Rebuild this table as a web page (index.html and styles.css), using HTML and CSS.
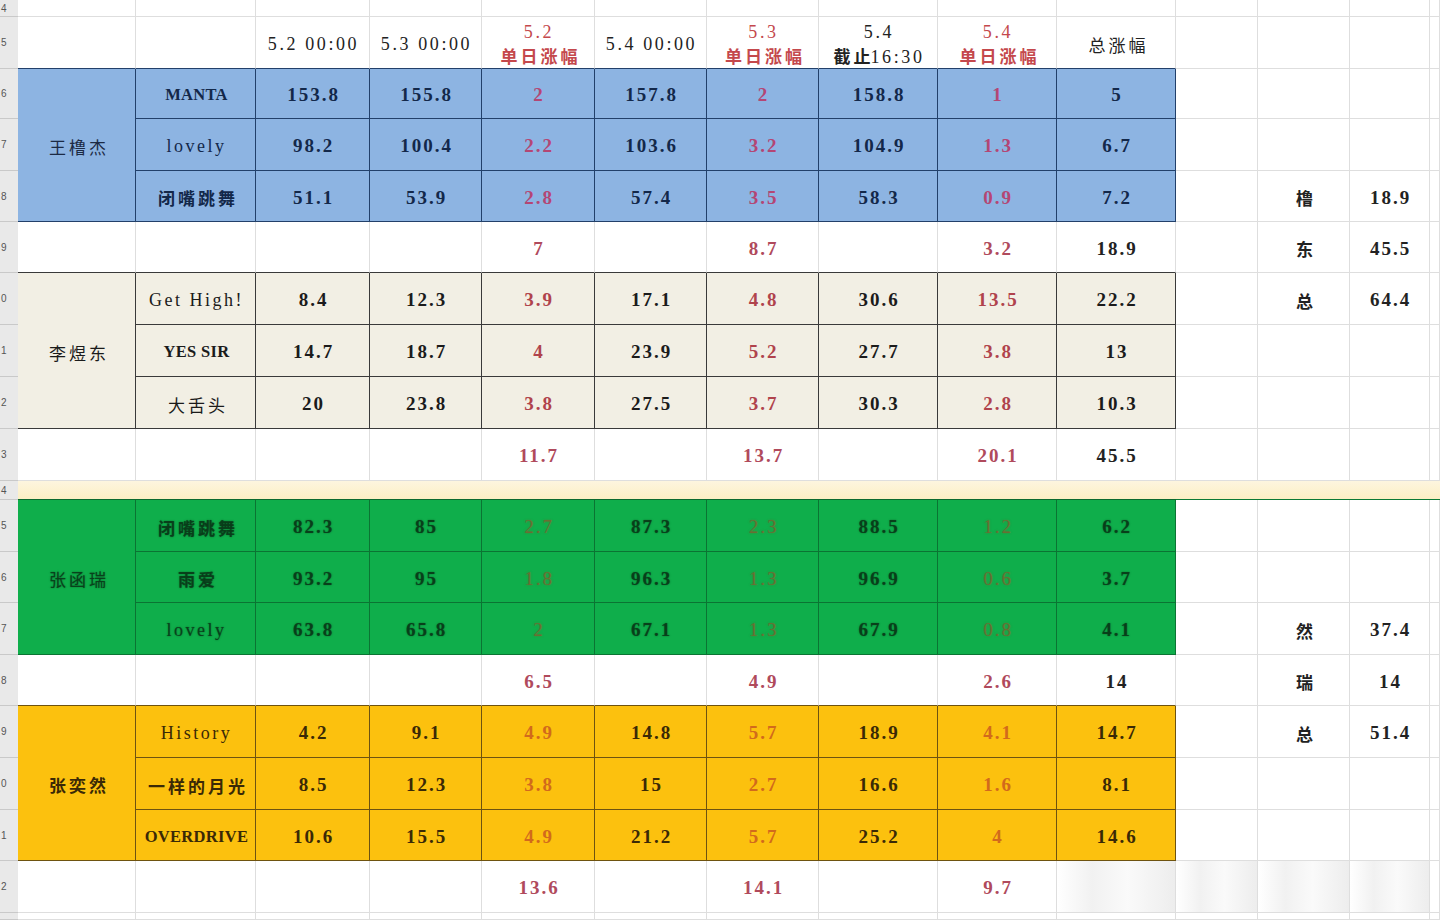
FILE: index.html
```html
<!DOCTYPE html>
<html lang="zh">
<head>
<meta charset="utf-8">
<title>涨幅统计</title>
<link rel="stylesheet" href="styles.css">
</head>
<body>
<div class="sheet">
  <!-- R1 -->
  <div class="g"><span>4</span></div>
  <div class="c"></div><div class="c"></div><div class="c"></div><div class="c"></div><div class="c"></div><div class="c"></div><div class="c"></div><div class="c"></div><div class="c"></div><div class="c"></div><div class="c"></div><div class="c"></div><div class="c"></div><div class="c"></div>
  <!-- R2 header -->
  <div class="g"><span>5</span></div>
  <div class="c hd-blue"></div>
  <div class="c hd-blue"></div>
  <div class="c hd-blue hx">5.2 00:00</div>
  <div class="c hd-blue hx">5.3 00:00</div>
  <div class="c hd-blue hr hx"><div class="two"><span>5.2</span><span class="cn bd">单日涨幅</span></div></div>
  <div class="c hd-blue hx">5.4 00:00</div>
  <div class="c hd-blue hr hx"><div class="two"><span>5.3</span><span class="cn bd">单日涨幅</span></div></div>
  <div class="c hd-blue hx"><div class="two"><span>5.4</span><span><span class="cn bd">截止</span>16:30</span></div></div>
  <div class="c hd-blue hr hx"><div class="two"><span>5.4</span><span class="cn bd">单日涨幅</span></div></div>
  <div class="c hd-blue"><span class="cn">总涨幅</span></div>
  <div class="c"></div><div class="c"></div><div class="c"></div><div class="c"></div>
  <!-- R3 -->
  <div class="g"><span>6</span></div>
  <div class="c b name"><span class="cn">王橹杰</span></div>
  <div class="c b song up">MANTA</div>
  <div class="c b v">153.8</div><div class="c b v">155.8</div><div class="c b r">2</div><div class="c b v">157.8</div><div class="c b r">2</div><div class="c b v">158.8</div><div class="c b r">1</div><div class="c b v">5</div>
  <div class="c"></div><div class="c"></div><div class="c"></div><div class="c"></div>
  <!-- R4 -->
  <div class="g"><span>7</span></div>
  <div class="c b song">lovely</div>
  <div class="c b v">98.2</div><div class="c b v">100.4</div><div class="c b r">2.2</div><div class="c b v">103.6</div><div class="c b r">3.2</div><div class="c b v">104.9</div><div class="c b r">1.3</div><div class="c b v">6.7</div>
  <div class="c"></div><div class="c"></div><div class="c"></div><div class="c"></div>
  <!-- R5 -->
  <div class="g"><span>8</span></div>
  <div class="c b song"><span class="cn bd">闭嘴跳舞</span></div>
  <div class="c b v">51.1</div><div class="c b v">53.9</div><div class="c b r">2.8</div><div class="c b v">57.4</div><div class="c b r">3.5</div><div class="c b v">58.3</div><div class="c b r">0.9</div><div class="c b v">7.2</div>
  <div class="c"></div><div class="c side"><span class="cn bd">橹</span></div><div class="c side v">18.9</div><div class="c"></div>
  <!-- R6 sum -->
  <div class="g"><span>9</span></div>
  <div class="c hd-tan"></div><div class="c hd-tan"></div><div class="c hd-tan"></div><div class="c hd-tan"></div>
  <div class="c hd-tan sr">7</div><div class="c hd-tan"></div><div class="c hd-tan sr">8.7</div><div class="c hd-tan"></div><div class="c hd-tan sr">3.2</div><div class="c hd-tan v">18.9</div>
  <div class="c"></div><div class="c side"><span class="cn bd">东</span></div><div class="c side v">45.5</div><div class="c"></div>
  <!-- R7 -->
  <div class="g"><span>0</span></div>
  <div class="c t name"><span class="cn">李煜东</span></div>
  <div class="c t song">Get High!</div>
  <div class="c t v">8.4</div><div class="c t v">12.3</div><div class="c t r">3.9</div><div class="c t v">17.1</div><div class="c t r">4.8</div><div class="c t v">30.6</div><div class="c t r">13.5</div><div class="c t v">22.2</div>
  <div class="c"></div><div class="c side"><span class="cn bd">总</span></div><div class="c side v">64.4</div><div class="c"></div>
  <!-- R8 -->
  <div class="g"><span>1</span></div>
  <div class="c t song up">YES SIR</div>
  <div class="c t v">14.7</div><div class="c t v">18.7</div><div class="c t r">4</div><div class="c t v">23.9</div><div class="c t r">5.2</div><div class="c t v">27.7</div><div class="c t r">3.8</div><div class="c t v">13</div>
  <div class="c"></div><div class="c"></div><div class="c"></div><div class="c"></div>
  <!-- R9 -->
  <div class="g"><span>2</span></div>
  <div class="c t song"><span class="cn">大舌头</span></div>
  <div class="c t v">20</div><div class="c t v">23.8</div><div class="c t r">3.8</div><div class="c t v">27.5</div><div class="c t r">3.7</div><div class="c t v">30.3</div><div class="c t r">2.8</div><div class="c t v">10.3</div>
  <div class="c"></div><div class="c"></div><div class="c"></div><div class="c"></div>
  <!-- R10 sum -->
  <div class="g"><span>3</span></div>
  <div class="c"></div><div class="c"></div><div class="c"></div><div class="c"></div>
  <div class="c sr">11.7</div><div class="c"></div><div class="c sr">13.7</div><div class="c"></div><div class="c sr">20.1</div><div class="c v">45.5</div>
  <div class="c"></div><div class="c"></div><div class="c"></div><div class="c"></div>
  <!-- R11 band -->
  <div class="g"><span>4</span></div>
  <div class="band wide"></div>
  <!-- R12 -->
  <div class="g"><span>5</span></div>
  <div class="c gr name ft"><span class="cn">张函瑞</span></div>
  <div class="c gr song ft"><span class="cn bd">闭嘴跳舞</span></div>
  <div class="c gr v ft">82.3</div><div class="c gr v ft">85</div><div class="c gr r ft">2.7</div><div class="c gr v ft">87.3</div><div class="c gr r ft">2.3</div><div class="c gr v ft">88.5</div><div class="c gr r ft">1.2</div><div class="c gr v ft">6.2</div>
  <div class="c"></div><div class="c"></div><div class="c"></div><div class="c"></div>
  <!-- R13 -->
  <div class="g"><span>6</span></div>
  <div class="c gr song"><span class="cn bd">雨爱</span></div>
  <div class="c gr v">93.2</div><div class="c gr v">95</div><div class="c gr r">1.8</div><div class="c gr v">96.3</div><div class="c gr r">1.3</div><div class="c gr v">96.9</div><div class="c gr r">0.6</div><div class="c gr v">3.7</div>
  <div class="c"></div><div class="c"></div><div class="c"></div><div class="c"></div>
  <!-- R14 -->
  <div class="g"><span>7</span></div>
  <div class="c gr song">lovely</div>
  <div class="c gr v">63.8</div><div class="c gr v">65.8</div><div class="c gr r">2</div><div class="c gr v">67.1</div><div class="c gr r">1.3</div><div class="c gr v">67.9</div><div class="c gr r">0.8</div><div class="c gr v">4.1</div>
  <div class="c"></div><div class="c side"><span class="cn bd">然</span></div><div class="c side v">37.4</div><div class="c"></div>
  <!-- R15 sum -->
  <div class="g"><span>8</span></div>
  <div class="c hd-gold"></div><div class="c hd-gold"></div><div class="c hd-gold"></div><div class="c hd-gold"></div>
  <div class="c hd-gold sr">6.5</div><div class="c hd-gold"></div><div class="c hd-gold sr">4.9</div><div class="c hd-gold"></div><div class="c hd-gold sr">2.6</div><div class="c hd-gold v">14</div>
  <div class="c"></div><div class="c side"><span class="cn bd">瑞</span></div><div class="c side v">14</div><div class="c"></div>
  <!-- R16 -->
  <div class="g"><span>9</span></div>
  <div class="c y name"><span class="cn bd">张奕然</span></div>
  <div class="c y song">History</div>
  <div class="c y v">4.2</div><div class="c y v">9.1</div><div class="c y r">4.9</div><div class="c y v">14.8</div><div class="c y r">5.7</div><div class="c y v">18.9</div><div class="c y r">4.1</div><div class="c y v">14.7</div>
  <div class="c"></div><div class="c side"><span class="cn bd">总</span></div><div class="c side v">51.4</div><div class="c"></div>
  <!-- R17 -->
  <div class="g"><span>0</span></div>
  <div class="c y song"><span class="cn bd">一样的月光</span></div>
  <div class="c y v">8.5</div><div class="c y v">12.3</div><div class="c y r">3.8</div><div class="c y v">15</div><div class="c y r">2.7</div><div class="c y v">16.6</div><div class="c y r">1.6</div><div class="c y v">8.1</div>
  <div class="c"></div><div class="c"></div><div class="c"></div><div class="c"></div>
  <!-- R18 -->
  <div class="g"><span>1</span></div>
  <div class="c y song up">OVERDRIVE</div>
  <div class="c y v">10.6</div><div class="c y v">15.5</div><div class="c y r">4.9</div><div class="c y v">21.2</div><div class="c y r">5.7</div><div class="c y v">25.2</div><div class="c y r">4</div><div class="c y v">14.6</div>
  <div class="c"></div><div class="c"></div><div class="c"></div><div class="c"></div>
  <!-- R19 sum -->
  <div class="g"><span>2</span></div>
  <div class="c"></div><div class="c"></div><div class="c"></div><div class="c"></div>
  <div class="c sr">13.6</div><div class="c"></div><div class="c sr">14.1</div><div class="c"></div><div class="c sr">9.7</div><div class="c smudge"></div>
  <div class="c smudge"></div><div class="c smudge"></div><div class="c smudge"></div><div class="c"></div>
  <!-- R20 -->
  <div class="g"></div>
  <div class="c"></div><div class="c"></div><div class="c"></div><div class="c"></div><div class="c"></div><div class="c"></div><div class="c"></div><div class="c"></div><div class="c"></div><div class="c"></div><div class="c"></div><div class="c"></div><div class="c"></div><div class="c"></div>
</div>
</body>
</html>
```
FILE: styles.css
```css
html, body {
  margin: 0;
  padding: 0;
  background: #ffffff;
}

.sheet {
  display: grid;
  width: 1440px;
  height: 920px;
  overflow: hidden;
  grid-template-columns: 18px 118px 120px 114px 112px 113px 112px 112px 119px 119px 119px 82px 92px 80px 10px;
  grid-template-rows: 17px 52px 50px 52px 51px 51px 52px 52px 52px 52px 19px 52px 51px 52px 51px 52px 52px 51px 52px 7px;
  font-family: "Liberation Serif", "Noto Sans CJK SC", serif;
  font-size: 19px;
  letter-spacing: 2px;
  color: #222222;
}

.g {
  box-sizing: border-box;
  background: #e9e9e9;
  border-bottom: 1px solid #c9c9c9;
  display: flex;
  align-items: center;
  overflow: hidden;
  font-family: "Liberation Sans", sans-serif;
  font-size: 10px;
  letter-spacing: 0;
  color: #555555;
  padding-left: 1px;
}

.c {
  --line: #dedede;
  box-sizing: border-box;
  border-right: 1px solid var(--line);
  border-bottom: 1px solid var(--line);
  display: flex;
  align-items: center;
  justify-content: center;
  text-align: center;
  white-space: nowrap;
  padding-top: 3px;
  padding-left: 2px;
}

.cn {
  font-family: "Noto Sans CJK SC", sans-serif;
  font-size: 17px;
  letter-spacing: 3px;
  margin-right: -3px;
}
.bd { font-weight: 700; }

.two {
  display: flex;
  flex-direction: column;
  align-items: center;
  line-height: 24px;
}

.hx { font-size: 18px; letter-spacing: 2.6px; }
.hd-blue { border-bottom-color: #22406a; }
.hd-tan { border-bottom-color: #3a3a3a; }
.hd-gold { border-bottom-color: #6e5310; }
.hr { color: #c4484c; }

.name { grid-row: span 3; }

.v { font-weight: 700; }
.song { font-size: 18px; letter-spacing: 2.5px; }
.song.up { font-size: 16.5px; letter-spacing: 0.3px; font-weight: 700; }
.sr { color: #b04a5c; font-weight: 700; }
.side { color: #222222; }

/* blue block */
.b {
  --line: #22406a;
  background: #8db4e2;
  color: #13284a;
}
.b.r { color: #b44674; font-weight: 700; }
.b.name { color: #1c2a44; }

/* tan block */
.t {
  --line: #3a3a3a;
  background: #f2efe4;
  color: #1b1b1b;
}
.t.r { color: #b0434c; font-weight: 700; }

/* band row */
.band {
  background: linear-gradient(#fdf5df, #fcefc4);
  border-bottom: 1px solid #0c7a36;
}
.wide { grid-column: span 14; }

/* green block */
.gr {
  --line: #0b7433;
  background: #0fae4b;
  color: rgba(8, 52, 22, 0.8);
  text-shadow: 0 0 1.5px rgba(8, 52, 22, 0.7);
}
.gr.r { color: rgba(150, 80, 40, 0.55); text-shadow: 0 0 2px rgba(150, 80, 40, 0.5); }
.ft { box-shadow: 0 -1px 0 #0b6a2f; }

/* gold block */
.y {
  --line: #6e5310;
  background: #fcc10e;
  color: #3a2906;
}
.y.r { color: #d26a1c; font-weight: 700; }
.y.name { color: #3a2906; }

.smudge {
  background: linear-gradient(90deg, #ffffff 0%, #f1f1f1 30%, #fafafa 60%, #ededed 100%);
}
```
